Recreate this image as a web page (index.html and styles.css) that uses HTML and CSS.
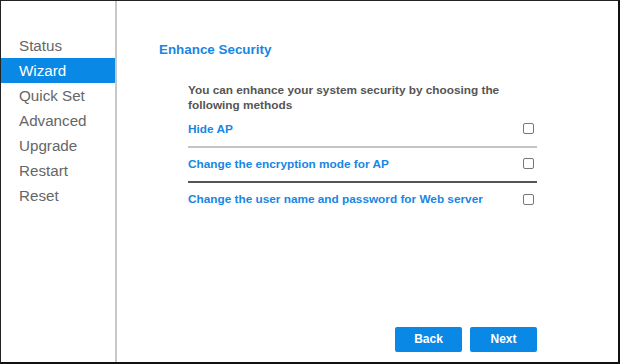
FILE: index.html
```html
<!DOCTYPE html>
<html lang="en">
<head>
    <meta charset="UTF-8">
    <meta name="viewport" content="width=device-width, initial-scale=1.0">
    <title>Wizard</title>
    <link rel="stylesheet" href="styles.css">
</head>
<body>
    <div id="wrap">
        <ul class="menu">
            <li>Status</li>
            <li class="on">Wizard</li>
            <li>Quick Set</li>
            <li>Advanced</li>
            <li>Upgrade</li>
            <li>Restart</li>
            <li>Reset</li>
        </ul>
        <div class="main">
            <h2 class="title">Enhance Security</h2>
            <div class="content">
                <p class="desc">You can enhance your system security by choosing the following methods</p>
                <div class="row line-light">
                    <span>Hide AP</span>
                    <span class="check"></span>
                </div>
                <div class="row line-dark">
                    <span>Change the encryption mode for AP</span>
                    <span class="check"></span>
                </div>
                <div class="row last">
                    <span>Change the user name and password for Web server</span>
                    <span class="check"></span>
                </div>
            </div>
            <div class="btns">
                <div class="btn">Back</div>
                <div class="btn">Next</div>
            </div>
        </div>
    </div>
</body>
</html>
```

FILE: styles.css
```css
* {
    margin: 0;
    padding: 0;
    box-sizing: border-box;
}
body {
    width: 620px;
    height: 364px;
    font-family: "Liberation Sans", Arial, sans-serif;
    background: #fff;
}

#wrap {
    width: 620px;
    height: 364px;
    display: flex;
    border-top: 1px solid #222;
    border-left: 1px solid #222;
    border-right: 2px solid #111;
    border-bottom: 2px solid #111;
}

.menu {
    width: 116px;
    flex-shrink: 0;
    list-style: none;
    padding-top: 32px;
    border-right: 2px solid #c8c8c8;
}
.menu li {
    height: 25px;
    line-height: 25px;
    padding-left: 18px;
    font-size: 15.2px;
    color: #666;
}
.menu li.on {
    background-color: #0a88e6;
    color: #fff;
}

.main {
    flex: 1;
    display: flex;
    flex-direction: column;
    padding: 41px 0 10px 42px;
}

.title {
    font-size: 13.4px;
    line-height: 16px;
    color: #1786e4;
    font-weight: bold;
}

.content {
    width: 349px;
    margin-left: 29px;
    margin-top: 25px;
}
.desc {
    font-size: 11.8px;
    line-height: 15px;
    font-weight: bold;
    color: #555;
}
.row {
    display: flex;
    justify-content: space-between;
    align-items: center;
    height: 35px;
    padding-bottom: 2px;
    font-size: 11.8px;
    font-weight: bold;
    color: #1786e4;
}
.row.last {
    padding-bottom: 3px;
}
.line-light {
    border-bottom: 2px solid #c4c4c4;
}
.line-dark {
    border-bottom: 2px solid #555;
}
.check {
    width: 11px;
    height: 11px;
    border: 1px solid #777;
    border-radius: 2px;
    margin-right: 3px;
}

.btns {
    margin-top: auto;
    display: flex;
    justify-content: flex-end;
    gap: 8px;
    padding-right: 81px;
}
.btn {
    width: 67px;
    height: 25px;
    line-height: 25px;
    text-align: center;
    background-color: #0a88e6;
    color: #fff;
    font-size: 12px;
    font-weight: bold;
    border-radius: 2px;
}
```
